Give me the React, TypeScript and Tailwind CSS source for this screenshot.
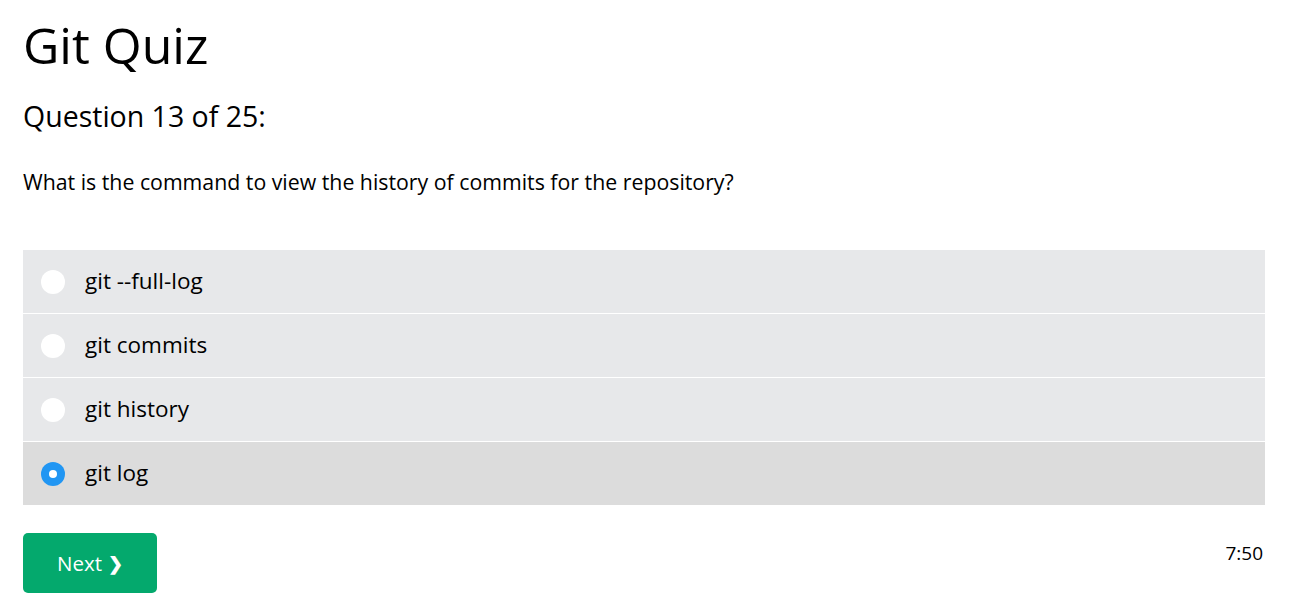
import React, { useState } from "react";

const options = ["git --full-log", "git commits", "git history", "git log"];

export default function App() {
    const [selected, setSelected] = useState(3);

    return (
        <div className="min-h-screen bg-white text-black font-['Open_Sans',sans-serif]">
            <div className="w-[1242px] ml-[23px] pt-[13px]">
                <h1 className="text-[50px] leading-[64px] font-normal">Git Quiz</h1>
                <h2 className="mt-[21px] text-[28.5px] leading-[36px] font-normal">Question 13 of 25:</h2>
                <p className="mt-[33px] text-[21.3px] leading-[30px]">What is the command to view the history of commits for the repository?</p>

                <div className="mt-[53px] flex flex-col gap-[1px]">
                    {options.map((opt, i) => {
                        const active = i === selected;
                        return (
                            <label
                                key={opt}
                                onClick={() => setSelected(i)}
                                className={`flex items-center h-[63px] px-[18px] cursor-pointer ${active ? "bg-[#dcdcdc]" : "bg-[#e7e8ea]"}`}
                            >
                                <span
                                    className={`w-[24px] h-[24px] rounded-full flex items-center justify-center ${active ? "bg-[#2196f3]" : "bg-white"}`}
                                >
                                    {active && <span className="w-[8px] h-[8px] rounded-full bg-white" />}
                                </span>
                                <span className="ml-[20px] text-[22.5px] leading-none">{opt}</span>
                            </label>
                        );
                    })}
                </div>

                <div className="mt-[28px] flex items-start justify-between">
                    <button className="w-[134px] h-[60px] rounded-[5px] bg-[#04a96d] text-white text-[20.5px] flex items-center justify-center gap-[6px]">
                        Next <span className="text-[18px] font-bold">❯</span>
                    </button>
                    <span className="mt-[6px] mr-[2px] text-[19px]">7:50</span>
                </div>
            </div>
        </div>
    );
}
